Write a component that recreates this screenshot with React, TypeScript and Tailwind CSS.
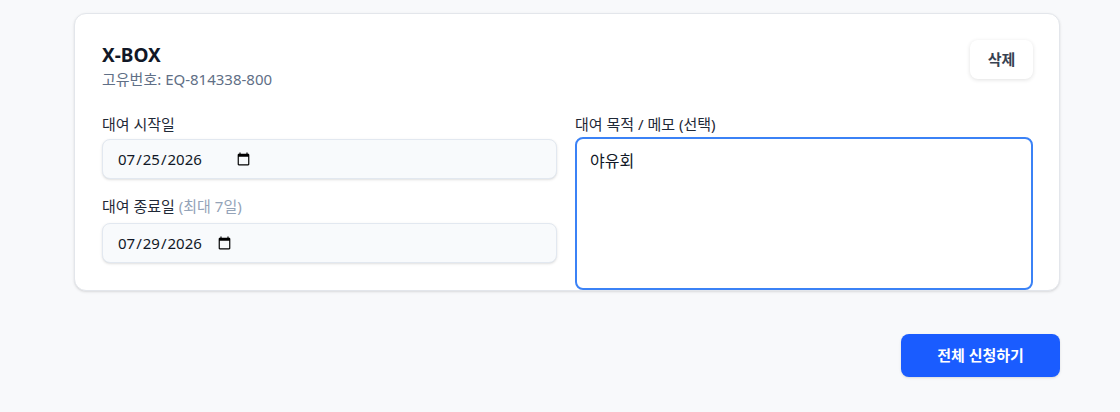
import React, { useState } from "react";

interface Equipment {
    name: string;
    code: string;
    startDate: string;
    endDate: string;
    memo: string;
}

export default function App() {
    const [items, setItems] = useState<Equipment[]>([
        {
            name: "X-BOX",
            code: "EQ-814338-800",
            startDate: "2026-07-25",
            endDate: "2026-07-29",
            memo: "야유회"
        }
    ]);

    const handleChange = (index: number, field: keyof Equipment, value: string) => {
        const next = [...items];
        next[index] = { ...next[index], [field]: value };
        setItems(next);
    };

    const handleRemove = (index: number) => {
        setItems(items.filter((_, i) => i !== index));
    };

    return (
        <div
            className="min-h-[412px] bg-[#f8f9fb] pt-[13px] pl-[74px] pr-[60px] pb-8"
            style={{ fontFamily: '"Noto Sans", "Noto Sans CJK KR", sans-serif' }}
        >
            <div className="flex flex-col gap-4">
                {items.map((item, index) => (
                    <div
                        key={index}
                        className="bg-white border border-[#e3e6eb] rounded-xl shadow-sm pl-[27px] pr-[26px] pt-[27px]"
                    >
                        <div className="flex items-start justify-between">
                            <div>
                                <h3 className="text-[19px] font-bold leading-7 text-[#111827]">{item.name}</h3>
                                <p className="text-[15px] leading-5 text-[#5f6f86]">고유번호: {item.code}</p>
                            </div>
                            <button
                                onClick={() => handleRemove(index)}
                                className="mt-[-1px] w-[63px] h-[39px] bg-white rounded-lg shadow-[0_1px_4px_rgba(0,0,0,0.12)] text-[15px] font-bold text-[#374151]"
                            >
                                삭제
                            </button>
                        </div>

                        <div className="grid grid-cols-[455px_1fr] gap-x-[18px] mt-[25px]">
                            <div className="flex flex-col pb-[27px]">
                                <label className="text-[15px] leading-5 text-[#1f2937] mb-[5px]">대여 시작일</label>
                                <div className="h-10 flex items-center px-[14px] bg-[#f8fafc] border border-[#e2e8f0] rounded-lg shadow-sm">
                                    <input
                                        type="date"
                                        value={item.startDate}
                                        onChange={(e) => handleChange(index, "startDate", e.target.value)}
                                        className="w-[136px] bg-transparent text-[15px] text-[#111827] outline-none"
                                    />
                                </div>
                                <label className="text-[15px] leading-5 text-[#1f2937] mt-[17px] mb-[7px]">
                                    대여 종료일 <span className="text-[#94a3b8]">(최대 7일)</span>
                                </label>
                                <div className="h-10 flex items-center px-[14px] bg-[#f8fafc] border border-[#e2e8f0] rounded-lg shadow-sm">
                                    <input
                                        type="date"
                                        value={item.endDate}
                                        onChange={(e) => handleChange(index, "endDate", e.target.value)}
                                        className="w-[117px] bg-transparent text-[15px] text-[#111827] outline-none"
                                    />
                                </div>
                            </div>
                            <div className="flex flex-col">
                                <label className="text-[15px] leading-5 text-[#1f2937] mb-[3px]">대여 목적 / 메모 (선택)</label>
                                <textarea
                                    value={item.memo}
                                    onChange={(e) => handleChange(index, "memo", e.target.value)}
                                    className="flex-1 resize-none px-[13px] pt-[10px] pb-2 border-2 border-[#3b82f6] rounded-lg text-base leading-6 text-[#111827] outline-none"
                                />
                            </div>
                        </div>
                    </div>
                ))}
            </div>

            <div className="flex justify-end mt-[43px]">
                <button className="w-[159px] h-[43px] bg-[#1a5cff] rounded-lg shadow-sm text-white text-[15px] font-bold">
                    전체 신청하기
                </button>
            </div>
        </div>
    );
}
